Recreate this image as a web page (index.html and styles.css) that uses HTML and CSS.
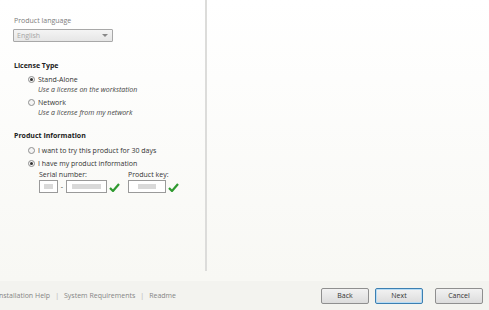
FILE: index.html
```html
<!DOCTYPE html>
<html lang="en">
<head>
    <meta charset="UTF-8">
    <title>Product License</title>
    <link rel="stylesheet" href="styles.css">
</head>
<body>
    <div class="window">
        <div class="main">
            <div class="left-panel">
                <div class="field-label">Product language</div>
                <div class="select">
                    <span>English</span>
                    <span class="arrow"></span>
                </div>

                <div class="section-title">License Type</div>
                <div class="option">
                    <span class="radio checked"></span>
                    <div>
                        <div class="option-text">Stand-Alone</div>
                        <div class="option-note">Use a license on the workstation</div>
                    </div>
                </div>
                <div class="option">
                    <span class="radio"></span>
                    <div>
                        <div class="option-text">Network</div>
                        <div class="option-note">Use a license from my network</div>
                    </div>
                </div>

                <div class="section-title info">Product Information</div>
                <div class="option single">
                    <span class="radio"></span>
                    <div class="option-text">I want to try this product for 30 days</div>
                </div>
                <div class="option single">
                    <span class="radio checked"></span>
                    <div class="option-text">I have my product information</div>
                </div>
                <div class="keys">
                    <div class="key-group">
                        <div class="key-label">Serial number:</div>
                        <div class="key-row">
                            <span class="box small"><i></i></span>
                            <span class="dash">-</span>
                            <span class="box wide"><i></i></span>
                            <svg class="check" width="11" height="9" viewBox="0 0 11 9"><path d="M1 5 L4 8 L10 1" fill="none" stroke="#2f9a2f" stroke-width="2.2"/></svg>
                        </div>
                    </div>
                    <div class="key-group">
                        <div class="key-label">Product key:</div>
                        <div class="key-row">
                            <span class="box key"><i></i></span>
                            <svg class="check" width="11" height="9" viewBox="0 0 11 9"><path d="M1 5 L4 8 L10 1" fill="none" stroke="#2f9a2f" stroke-width="2.2"/></svg>
                        </div>
                    </div>
                </div>
            </div>
            <div class="right-panel"></div>
        </div>
        <div class="footer">
            <div class="links">
                <span>Installation Help</span>
                <span class="sep">|</span>
                <span>System Requirements</span>
                <span class="sep">|</span>
                <span>Readme</span>
            </div>
            <div class="buttons">
                <button>Back</button>
                <button class="primary">Next</button>
                <button class="cancel">Cancel</button>
            </div>
        </div>
    </div>
</body>
</html>
```

FILE: styles.css
```css
body {
    margin: 0;
    font-family: 'Open Sans', sans-serif;
    font-size: 7px;
    color: #333;
    overflow: hidden;
}

.window {
    width: 489px;
    height: 310px;
    display: flex;
    flex-direction: column;
    background: linear-gradient(180deg, #ffffff, #f8f8f4 280px);
}

.main {
    flex: 1;
    display: flex;
    padding-bottom: 10px;
}

.left-panel {
    width: 191px;
    padding: 15px 0 0 14px;
    border-right: 2px solid #dcdcda;
}

.right-panel {
    flex: 1;
}

.field-label {
    color: #7c7c7c;
    line-height: 12px;
}

.select {
    width: 91px;
    height: 11px;
    margin: 2px 0 0 -1px;
    border: 1px solid #a8a8a8;
    background: linear-gradient(#f4f4f4, #e6e6e6);
    color: #a6a6a6;
    display: flex;
    align-items: center;
    justify-content: space-between;
    padding: 0 4px 0 3px;
    border-radius: 1px;
}

.select .arrow {
    border-left: 3px solid transparent;
    border-right: 3px solid transparent;
    border-top: 3px solid #888;
}

.section-title {
    font-weight: bold;
    color: #222;
    margin-top: 18px;
    line-height: 12px;
}

.section-title.info {
    margin-top: 12px;
}

.option {
    display: flex;
    align-items: flex-start;
    gap: 3px;
    margin: 3px 0 0 14px;
}

.option-text {
    line-height: 10px;
    color: #333;
}

.option.single {
    margin-top: 2px;
}

.section-title.info + .option.single {
    margin-top: 3px;
}

.option.single .option-text {
    line-height: 11px;
}

.option-note {
    font-style: italic;
    line-height: 10px;
    color: #444;
}

.radio {
    width: 5px;
    height: 5px;
    margin-top: 1px;
    border: 1px solid #8e8f8f;
    border-radius: 50%;
    background: #f4f4f4;
    display: flex;
    align-items: center;
    justify-content: center;
}

.option.single .radio {
    margin-top: 2px;
}

.radio.checked::after {
    content: "";
    width: 3px;
    height: 3px;
    border-radius: 50%;
    background: #333;
}

.keys {
    display: flex;
    gap: 8px;
    margin: 1px 0 0 25px;
}

.key-label {
    line-height: 10px;
    color: #333;
}

.key-row {
    display: flex;
    align-items: center;
}

.box {
    height: 11px;
    border: 1px solid #9a9a9a;
    background: #fff;
    display: flex;
    align-items: center;
    justify-content: center;
}

.box i {
    height: 5px;
    background: #d9d9d9;
}

.box.small { width: 17px; }
.box.small i { width: 9px; }
.box.wide { width: 39px; }
.box.wide i { width: 29px; }
.box.key { width: 36px; }
.box.key i { width: 18px; }

.dash {
    width: 8px;
    text-align: center;
}

.check {
    margin: 2px 0 0 2px;
}

.footer {
    height: 29px;
    background: #f3f3ef;
    display: flex;
    align-items: center;
    justify-content: space-between;
    padding-right: 6px;
}

.links {
    margin-left: -3px;
    color: #858585;
    display: flex;
    gap: 5px;
}

.links .sep {
    color: #b0b0b0;
}

.buttons {
    display: flex;
    gap: 6px;
}

button {
    font-family: inherit;
    font-size: 7px;
    color: #333;
    width: 48px;
    height: 16px;
    padding: 0;
    border: 1px solid #8f8f8f;
    border-radius: 2px;
    background: linear-gradient(#f2f2f2, #dcdcdc);
}

button.primary {
    border-color: #3c7fb1;
    box-shadow: inset 0 0 0 1px #b6dcf5;
}

button.cancel {
    margin-left: 6px;
}
```
